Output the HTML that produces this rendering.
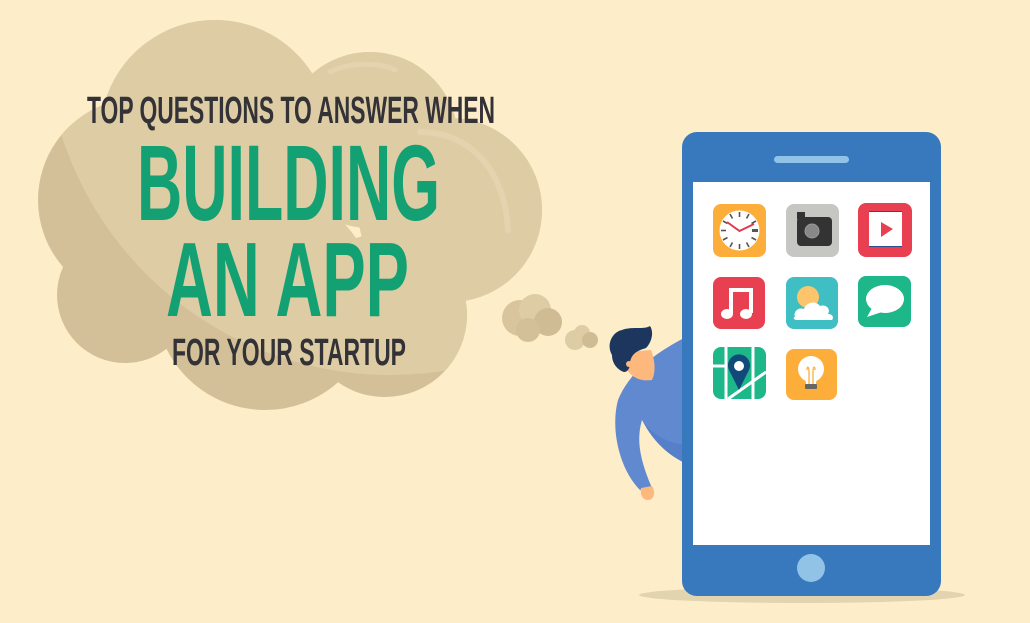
<!DOCTYPE html>
<html><head><meta charset="utf-8"><style>
html,body{margin:0;padding:0;background:#fdedc8;}
svg{display:block}
</style></head><body>
<svg width="1030" height="623" viewBox="0 0 1030 623" xmlns="http://www.w3.org/2000/svg">
<rect width="1030" height="623" fill="#fdedc8"/>
<defs>
<clipPath id="cl">
<circle cx="215" cy="135" r="115"/><circle cx="370" cy="140" r="88"/><circle cx="450" cy="210" r="92"/>
<circle cx="140" cy="200" r="102"/><circle cx="125" cy="295" r="68"/><circle cx="265" cy="300" r="110"/>
<circle cx="385" cy="315" r="82"/>
</clipPath>
</defs>
<g clip-path="url(#cl)">
<rect x="0" y="0" width="600" height="450" fill="#d3c098"/>
<circle cx="390" cy="30" r="345" fill="#decca4"/>
<path d="M420 132 C470 132 505 170 508 230" stroke="#e4d3ae" stroke-width="6" fill="none" stroke-linecap="round"/>
<path d="M330 72 C350 62 380 62 395 70" stroke="#e4d3ae" stroke-width="5" fill="none" stroke-linecap="round"/>
</g>
<!-- small clouds -->
<g>
<circle cx="520" cy="318" r="18" fill="#d8c59d"/><circle cx="535" cy="310" r="16" fill="#decca4"/>
<circle cx="548" cy="322" r="14" fill="#cfbc94"/><circle cx="528" cy="330" r="12" fill="#d3c098"/>
<circle cx="575" cy="340" r="10" fill="#decca4"/><circle cx="582" cy="333" r="8" fill="#decca4"/><circle cx="590" cy="340" r="8" fill="#cfbc94"/>
</g>
<!-- text -->
<g font-family="'Liberation Sans Narrow','Liberation Sans',sans-serif" font-weight="bold">
<text x="87" y="123" font-size="38" fill="#333236" textLength="408" lengthAdjust="spacingAndGlyphs">TOP QUESTIONS TO ANSWER WHEN</text>
<text x="137" y="220" font-size="108" fill="#13a073" textLength="303" lengthAdjust="spacingAndGlyphs">BUILDING</text>
<text x="166" y="316" font-size="106" fill="#13a073" textLength="243" lengthAdjust="spacingAndGlyphs">AN APP</text>
<text x="172" y="365" font-size="38" fill="#333236" textLength="234" lengthAdjust="spacingAndGlyphs">FOR YOUR STARTUP</text>
</g>
<!-- phone shadow -->
<ellipse cx="802" cy="595" rx="163" ry="8" fill="#e3d4b0"/>
<!-- person -->
<path d="M690 335 C660 350 630 370 618 400 C610 430 620 470 640 490 L652 488 C640 460 636 440 642 420 C660 450 680 462 690 465 Z" fill="#6089d0"/>
<path d="M642 420 C655 445 672 458 690 465 L690 445 C670 445 652 435 642 420 Z" fill="#567fc9"/>
<path d="M641 488 L652 486 C656 492 654 500 648 500 C642 500 640 494 641 488Z" fill="#fdb87e"/>
<path d="M622 360 C628 376 638 382 652 380 C656 372 655 360 651 350 L628 352 Z" fill="#fdb87e"/>
<path d="M612 355 C606 345 612 332 622 330 C632 326 644 330 650 326 C654 332 652 342 646 348 C640 350 632 352 630 362 C630 368 628 372 624 372 C618 370 612 364 612 355Z" fill="#1c365e"/>
<circle cx="629" cy="364" r="3" fill="#fdb87e"/>
<!-- phone -->
<rect x="682" y="132" width="259" height="464" rx="15" fill="#3879bd"/>
<rect x="693" y="182" width="237" height="363" fill="#ffffff"/>
<rect x="774" y="156" width="75" height="7" rx="3.5" fill="#90c3e6"/>
<circle cx="811" cy="568" r="14" fill="#90c3e6"/>
<!-- icons row1 -->
<rect x="713" y="204" width="53" height="53" rx="8" fill="#fdae3a"/>
<circle cx="739.5" cy="230.5" r="20" fill="#fff"/>
<g stroke="#555" stroke-width="1.6">
<line x1="739.5" y1="212" x2="739.5" y2="217"/><line x1="739.5" y1="244" x2="739.5" y2="249"/>
<line x1="721" y1="230.5" x2="726" y2="230.5"/><line x1="752" y1="230.5" x2="758" y2="230.5" stroke-width="3"/>
<line x1="730" y1="214" x2="732.5" y2="218.5"/><line x1="749" y1="214" x2="746.5" y2="218.5"/>
<line x1="723" y1="221" x2="727.5" y2="223.5"/><line x1="756" y1="221" x2="751.5" y2="223.5"/>
<line x1="723" y1="240" x2="727.5" y2="237.5"/><line x1="756" y1="240" x2="751.5" y2="237.5"/>
<line x1="730" y1="247" x2="732.5" y2="242.5"/><line x1="749" y1="247" x2="746.5" y2="242.5"/>
</g>
<path d="M727 222 L739.5 231 L754 224" stroke="#e0394b" stroke-width="2" fill="none"/>
<rect x="786" y="204" width="53" height="53" rx="8" fill="#c6c7c3"/>
<rect x="797" y="217" width="35" height="29" rx="4" fill="#333"/>
<rect x="797" y="212" width="8" height="7" fill="#333"/>
<circle cx="812" cy="231" r="7" fill="#888" stroke="#999" stroke-width="1"/>
<rect x="858" y="203" width="54" height="54" rx="8" fill="#e84050"/>
<rect x="869" y="211" width="33" height="36" fill="#fff"/>
<line x1="869" y1="211.5" x2="902" y2="211.5" stroke="#2b4f8c" stroke-width="1"/>
<line x1="869" y1="246.5" x2="902" y2="246.5" stroke="#2b4f8c" stroke-width="1"/>
<path d="M881 222 L893 229 L881 237 Z" fill="#e84050"/>
<!-- row2 -->
<rect x="713" y="277" width="52" height="52" rx="8" fill="#e84050"/>
<path d="M729 290 L751 290 L751 313" stroke="#fff" stroke-width="4" fill="none"/>
<path d="M731 288 L731 313" stroke="#fff" stroke-width="4"/>
<ellipse cx="727" cy="314" rx="6" ry="5" fill="#fff"/><ellipse cx="746" cy="314" rx="6" ry="5" fill="#fff"/>
<rect x="786" y="277" width="52" height="52" rx="8" fill="#3fbfc4"/>
<circle cx="808" cy="297" r="11" fill="#fcc56b"/>
<path d="M795 317 C793 311 799 307 804 309 C806 302 816 300 820 306 C826 304 831 309 828 314 C833 314 834 318 832 320 L797 320 C793 320 793 317 795 317Z" fill="#fff"/>
<rect x="858" y="276" width="53" height="51" rx="8" fill="#1db78a"/>
<ellipse cx="885" cy="299" rx="19" ry="14" fill="#fff"/>
<path d="M872 308 L867 317 L882 312 Z" fill="#fff"/>
<!-- row3 -->
<rect x="713" y="347" width="53" height="52" rx="8" fill="#1db78a"/>
<line x1="726" y1="347" x2="726" y2="399" stroke="#fff" stroke-width="3"/>
<line x1="753" y1="347" x2="753" y2="399" stroke="#fff" stroke-width="3"/>
<line x1="713" y1="366" x2="726" y2="366" stroke="#fff" stroke-width="3"/>
<line x1="728" y1="399" x2="766" y2="372" stroke="#fff" stroke-width="3"/>
<path d="M739 390 L729 370 A11 11 0 1 1 749 370 Z" fill="#0f4a7a"/>
<circle cx="739" cy="366" r="5" fill="#fff"/>
<rect x="786" y="349" width="51" height="51" rx="8" fill="#fdae3a"/>
<circle cx="811" cy="369" r="13" fill="#fff"/>
<path d="M805 374 L806 384 L816 384 L817 374 Z" fill="#fff"/>
<path d="M807 370 C807 366 809 366 809 372 L809 384 M815 370 C815 366 813 366 813 372 L813 384" stroke="#fdae3a" stroke-width="1.3" fill="none"/>
<rect x="805" y="384" width="12" height="5" rx="1" fill="#666"/>
</svg>
</body></html>
